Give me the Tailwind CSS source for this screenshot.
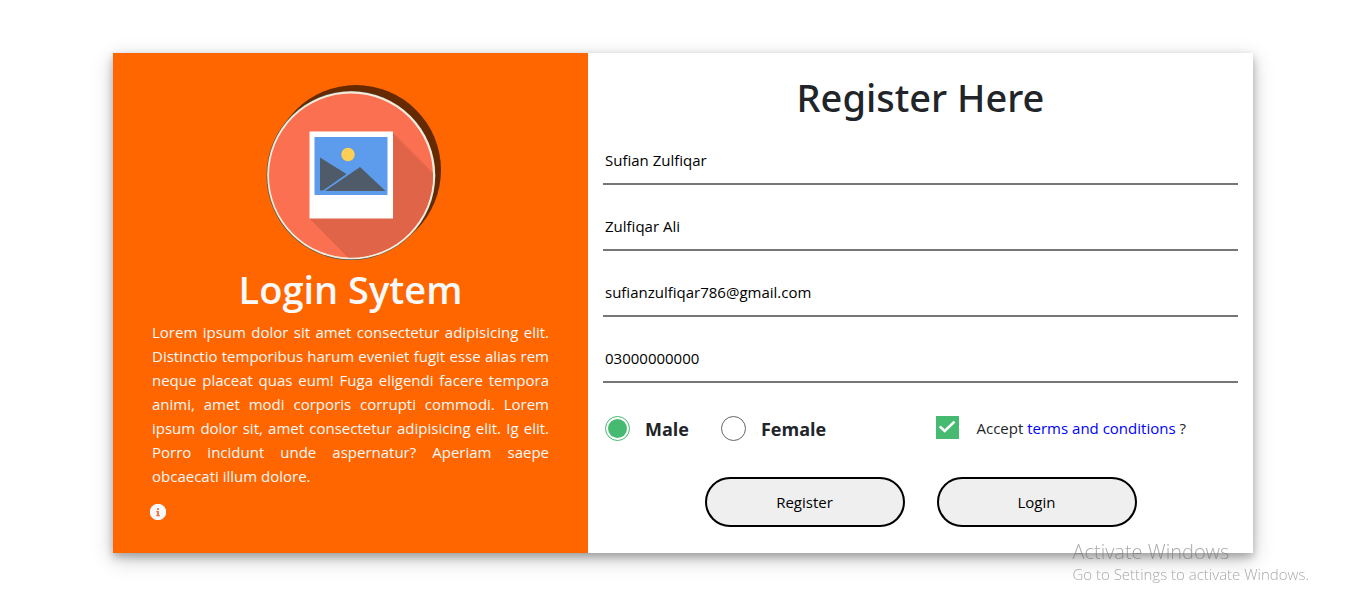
<!DOCTYPE html>
<html lang="en">
<head>
<meta charset="utf-8">
<meta name="viewport" content="width=device-width, initial-scale=1">
<title>Register</title>
<script src="https://cdn.jsdelivr.net/npm/@tailwindcss/browser@4"></script>
</head>
<body class="min-h-screen bg-white pt-[53px] pb-[60px] pl-[11px] font-['Segoe_UI','Open_Sans',sans-serif] text-[15px] leading-6 text-[#212529]">
<main class="mx-auto grid max-w-[1140px] grid-cols-1 bg-white shadow-[0_4px_8px_rgba(0,0,0,0.25),0_6px_20px_rgba(0,0,0,0.22)] md:grid-cols-[5fr_7fr]">
  <section class="flex flex-col bg-[#ff6600] px-[39px] pt-[37px] pb-[33px] text-[#f8f9fa]">
    <svg class="mx-auto size-[170px] overflow-visible" viewBox="0 0 170 170" role="img" aria-label="Picture">
      <defs><clipPath id="disc"><circle cx="85" cy="85.500" r="82"/></clipPath></defs>
      <circle cx="90" cy="80" r="85" fill="#662900"/>
      <circle cx="85" cy="85.500" r="84.500" fill="#4f5a55"/>
      <circle cx="85.200" cy="85.300" r="84" fill="#f4ecd8"/>
      <circle cx="85" cy="85.500" r="82" fill="#fc7052"/>
      <path clip-path="url(#disc)" d="M127 43L190 106V190H104L43.500 128.500Z" fill="#e06448"/>
      <path d="M43.500 41.500h83.500v87H43.500z" fill="#fff"/>
      <path d="M48.500 47h73v58h-73z" fill="#5d9cec"/>
      <circle cx="82" cy="64.500" r="6.700" fill="#ffce54"/>
      <path d="M54 67.500L80.500 84L57 100.500H54ZM94 77L119.500 101H59Z" fill="#4f5b69"/>
    </svg>
    <h1 class="mt-[5px] text-center text-[38px] leading-[48px] font-semibold">Login Sytem</h1>
    <p class="mt-[7px] text-justify">Lorem ipsum dolor sit amet consectetur adipisicing elit. Distinctio temporibus harum eveniet fugit esse alias rem neque placeat quas eum! Fuga eligendi facere tempora animi, amet modi corporis corrupti commodi. Lorem ipsum dolor sit, amet consectetur adipisicing elit. Ig elit. Porro incidunt unde aspernatur? Aperiam saepe obcaecati illum dolore.</p>
    <a href="#" aria-label="Information" class="mt-4 -ml-0.5 block size-4">
      <svg viewBox="0 0 16 16" class="size-4"><circle cx="8" cy="8" r="8.200" fill="#f8f9fa"/><path d="M7 4.300h2v1.700H7zM6.200 7H9v4h.9v1.200H6.200V11h.9V8.200h-.9z" fill="#ff6f3c"/></svg>
    </a>
  </section>
  <form class="flex flex-col px-[15px] pt-5 pb-[26px]">
    <h2 class="mb-[14px] text-center font-['Segoe_UI','Noto_Sans',sans-serif] text-[38px] leading-[48px] font-medium">Register Here</h2>
    <div class="flex flex-col gap-4 text-black">
      <input type="text" aria-label="Name" value="Sufian Zulfiqar" class="h-[50px] w-full border-b-2 border-[#767676] px-0.5 pt-0.5 outline-none">
      <input type="text" aria-label="Father name" value="Zulfiqar Ali" class="h-[50px] w-full border-b-2 border-[#767676] px-0.5 pt-0.5 outline-none">
      <input type="email" aria-label="Email" value="sufianzulfiqar786@gmail.com" class="h-[50px] w-full border-b-2 border-[#767676] px-0.5 pt-0.5 outline-none">
      <input type="tel" aria-label="Phone" value="03000000000" class="h-[50px] w-full border-b-2 border-[#767676] px-0.5 pt-0.5 outline-none">
    </div>
    <div class="mt-[33px] grid grid-cols-2 gap-[30px]">
      <div class="flex items-center gap-8 pl-0.5 text-[18px] font-bold">
        <label class="flex items-center gap-[15px]"><input type="radio" name="gender" checked class="size-[25px] appearance-none rounded-full border border-[#666] bg-clip-content p-0.5 checked:border-[#46ba70] checked:bg-[#46ba70]">Male</label>
        <label class="flex items-center gap-[15px]"><input type="radio" name="gender" class="size-[25px] appearance-none rounded-full border border-[#666] bg-clip-content p-0.5 checked:border-[#46ba70] checked:bg-[#46ba70]">Female</label>
      </div>
      <div class="flex items-start gap-[18px]">
        <span class="grid size-[23px] shrink-0">
          <input id="terms" type="checkbox" checked class="peer col-start-1 row-start-1 size-[23px] appearance-none border border-[#666] checked:border-[#46ba70] checked:bg-[#46ba70]">
          <svg viewBox="0 0 23 23" class="pointer-events-none invisible col-start-1 row-start-1 size-[23px] peer-checked:visible" fill="none" stroke="#fff" stroke-width="2.600"><path d="M3.700 10.400L8.700 15L18.500 5.600"/></svg>
        </span>
        <span><label for="terms">Accept</label> <a href="#" class="text-[#0000ff]">terms and conditions</a> ?</span>
      </div>
    </div>
    <div class="mt-9 flex justify-center gap-8 text-black">
      <button type="submit" class="h-[50px] w-[200px] rounded-full border-2 border-black bg-[#efefef]">Register</button>
      <button type="button" class="h-[50px] w-[200px] rounded-full border-2 border-black bg-[#efefef]">Login</button>
    </div>
  </form>
</main>
<aside class="pointer-events-none fixed right-[46px] bottom-[29px] font-light text-[#6f6f6f]/60">
  <p class="text-[20px] leading-6">Activate Windows</p>
  <p class="text-[15px] leading-5">Go to Settings to activate Windows.</p>
</aside>
</body>
</html>
